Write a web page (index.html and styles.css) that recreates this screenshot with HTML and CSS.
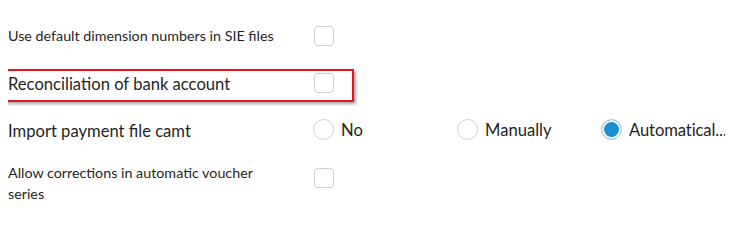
FILE: index.html
```html
<!DOCTYPE html>
<html>
<head>
<meta charset="utf-8">
<link rel="stylesheet" href="styles.css">
</head>
<body>
<div class="form">
  <div class="row">
    <div class="label small">Use default dimension numbers in SIE files</div>
    <div class="control"><span class="checkbox"></span></div>
  </div>
  <div class="row highlighted">
    <div class="label shifted">Reconciliation of bank account</div>
    <div class="control"><span class="checkbox"></span></div>
    <div class="highlight"></div>
  </div>
  <div class="row">
    <div class="label shifted">Import payment file camt</div>
    <div class="control radios">
      <label class="option"><span class="radio"></span><span class="opt-text">No</span></label>
      <label class="option"><span class="radio"></span><span class="opt-text">Manually</span></label>
      <label class="option last"><span class="radio checked"></span><span class="opt-text">Automatical...</span></label>
    </div>
  </div>
  <div class="row tall">
    <div class="label small two">Allow corrections in automatic voucher series</div>
    <div class="control top"><span class="checkbox"></span></div>
  </div>
</div>
</body>
</html>
```

FILE: styles.css
```css
html, body {
  margin: 0;
  padding: 0;
  background: #fff;
}
body {
  margin: 8px;
  font-family: "Lato", "Open Sans", sans-serif;
  color: #1f1f24;
}
.form {
  padding-top: 4px;
}
.row {
  position: relative;
  display: grid;
  grid-template-columns: 306px 1fr;
  align-items: center;
  height: 47px;
}
.row.tall {
  height: 60px;
  align-items: start;
}
.label {
  font-size: 16.6px;
  line-height: 21px;
}
.label.shifted {
  padding-top: 3px;
}
.label.small {
  font-size: 14.3px;
}
.label.two {
  width: 260px;
  padding-top: 9px;
}
.control {
  display: flex;
  align-items: center;
  min-width: 0;
}
.control.top {
  padding-top: 15px;
}
.checkbox {
  display: block;
  width: 18px;
  height: 18px;
  border: 1px solid #cfcfcf;
  border-radius: 4px;
  background: #fff;
}
.option {
  display: flex;
  align-items: center;
  width: 145px;
  flex: none;
  font-size: 16.6px;
  margin-left: -1px;
}
.option.last {
  width: auto;
}
.option.last .opt-text {
  letter-spacing: -0.1px;
}
.radio {
  flex: none;
  display: block;
  width: 19px;
  height: 19px;
  border: 1px solid #cfcfcf;
  border-radius: 50%;
  background: #fff;
}
.radio.checked {
  background: #1a8fcf;
  box-shadow: inset 0 0 0 2px #fff;
}
.opt-text {
  margin-left: 7px;
  white-space: nowrap;
}
.highlight {
  position: absolute;
  left: -6px;
  top: 10px;
  width: 348px;
  height: 29px;
  border: 2px solid #e8141b;
  box-shadow: 2px 2px 3px rgba(0, 0, 0, 0.35);
  pointer-events: none;
}
```
